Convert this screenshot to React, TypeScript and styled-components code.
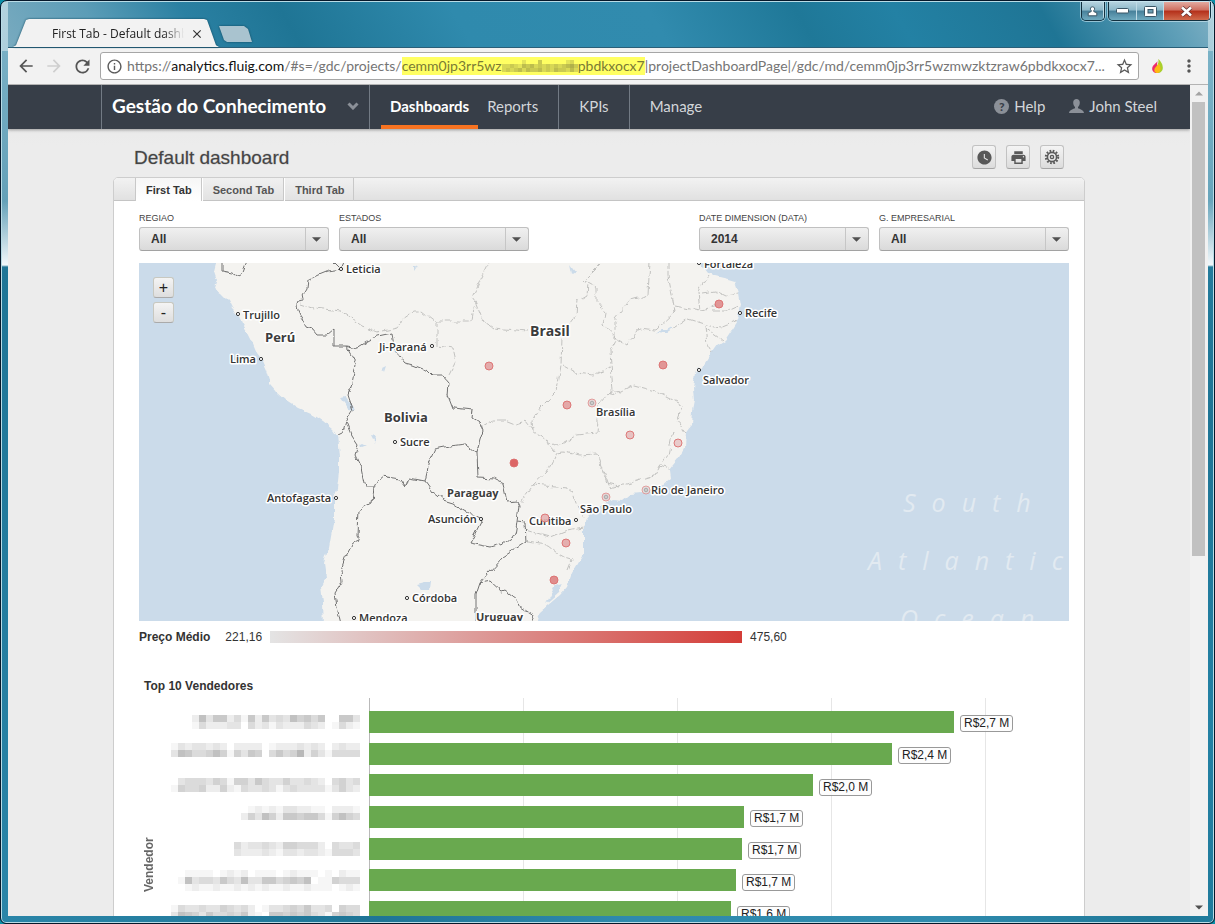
import React from "react";
import styled, { createGlobalStyle } from "styled-components";
import {
  MdArrowBack,
  MdArrowForward,
  MdRefresh,
  MdInfoOutline,
  MdStarBorder,
  MdMoreVert,
  MdPrint,
  MdWatchLater,
  MdClose,
} from "react-icons/md";

const ui = `"Open Sans", "Noto Sans", sans-serif`;
const brand = `Lato, "Open Sans", sans-serif`;
const body = `"Liberation Sans", Arial, sans-serif`;

const GlobalStyle = createGlobalStyle`
  *, *::before, *::after { box-sizing: border-box; }
  html, body { margin: 0; height: 100%; overflow: hidden; background: #0a8fa8; }
  button, select { font: inherit; color: inherit; margin: 0; padding: 0; border: 0; background: none; cursor: pointer; }
  a { color: inherit; text-decoration: none; }
  svg { display: block; flex: none; }
`;

/* ---------- Window frame ---------- */

const Window = styled.div`
  display: flex;
  flex-direction: column;
  height: 100vh;
  padding: 1px 6px 7px 7px;
  border: 1px solid #06182a;
  border-radius: 7px 7px 6px 6px;
  box-shadow: inset 0 0 0 1px #b9dce6;
  background:
    linear-gradient(100deg, rgba(255, 255, 255, 0.42) 0, rgba(255, 255, 255, 0.3) 60px, transparent 240px) 0 0 / 100% 50px no-repeat,
    linear-gradient(260deg, rgba(255, 255, 255, 0.38) 0, rgba(255, 255, 255, 0.3) 60px, transparent 240px) 0 0 / 100% 50px no-repeat,
    linear-gradient(180deg, rgba(255, 255, 255, 0.4) 0, rgba(255, 255, 255, 0.3) 200px, #f2f8fb 264px, transparent 266px) 0 0 / 100% 100% no-repeat,
    linear-gradient(60deg, #2a85a8 0, #1f7596 22%, #2f8aad 36%, #308bae 54%, #1f7898 66%, #2381a4 76%, #1f7595 86%, #2d87a8 100%);
`;

const TitleBar = styled.header`
  display: flex;
  align-items: flex-end;
  flex: none;
  height: 45px;
  padding-left: 5px;
  background: linear-gradient(60deg, #78aabf 0, #5c9db7 8%, #2a80a2 16%, #1f7595 24%, #2f8aad 38%, #318bae 54%, #1f7898 66%, #2381a4 74%, #1f7595 86%, #5f9fb8 96%, #7fb0c4 100%);
`;

const TabOutline = styled.div`
  filter: drop-shadow(0 0 1px #10485f);
`;

const BrowserTab = styled.div`
  display: flex;
  align-items: center;
  width: 206px;
  height: 28px;
  padding: 2px 15px 0 39px;
  gap: 6px;
  font: 12px/16px ${ui};
  color: #222;
  background: #f2f2f2;
  clip-path: polygon(0 100%, 3px 94%, 13px 4%, 16px 0, 191px 0, 194px 4%, 203px 94%, 100% 100%);
`;

const TabTitle = styled.span`
  flex: 0 0 132px;
  overflow: hidden;
  white-space: nowrap;
  mask-image: linear-gradient(90deg, #000 112px, transparent 132px);
`;

const NewTab = styled.button`
  width: 33px;
  height: 16px;
  margin-bottom: 5px;
  background: #a9c3cf;
  clip-path: polygon(0 0, 25px 0, 29px 3px, 33px 100%, 8px 100%, 5px 14px);
`;

const WindowButtons = styled.div`
  display: flex;
  align-self: flex-start;
  margin: 0 -3px 0 auto;
  gap: 3px;
`;

const ButtonGroup = styled.div`
  display: flex;
  height: 19px;
  border: 1px solid #12303f;
  border-top: 0;
  border-radius: 0 0 5px 5px;
  box-shadow: 0 0 0 1px rgba(210, 235, 245, 0.6);
  overflow: hidden;
`;

const CaptionButton = styled.button<{ $width: number; $danger?: boolean }>`
  display: flex;
  align-items: center;
  justify-content: center;
  width: ${(p) => p.$width}px;
  border-right: 1px solid #bfdbe6;
  background: ${(p) =>
    p.$danger
      ? "linear-gradient(#e3aaa0 0, #cf6f60 45%, #b4301a 50%, #d06a4c 100%)"
      : "linear-gradient(#b5d3df 0, #8db8c9 45%, #47809a 50%, #6faabf 100%)"};
`;

const Toolbar = styled.div`
  display: flex;
  align-items: center;
  flex: none;
  height: 38px;
  padding: 0 5px 0 8px;
  background: #f2f2f2;
  border-top: 1px solid #2a5f78;
  border-bottom: 1px solid #b3b3b3;
`;

const ToolButton = styled.button<{ $dim?: boolean }>`
  display: flex;
  align-items: center;
  justify-content: center;
  width: 28px;
  height: 28px;
  flex: none;
  color: ${(p) => (p.$dim ? "#cfcfcf" : "#555")};
`;

const NavButtons = styled.div`
  display: flex;
  flex: none;
  width: 84px;
  margin-left: -4px;
`;

const ExtensionButtons = styled.div`
  display: flex;
  flex: none;
  gap: 4px;
  margin-left: 4px;
`;

const AddressBar = styled.div`
  display: flex;
  align-items: center;
  flex: 1;
  min-width: 0;
  height: 28px;
  margin-left: 4px;
  padding: 0 4px 0 5px;
  gap: 4px;
  border: 1px solid #a6a6a6;
  border-radius: 3px;
  background: #fff;
  color: #5a5a5a;
`;

const Url = styled.div`
  display: flex;
  align-items: center;
  flex: 1;
  min-width: 0;
  overflow: hidden;
  white-space: nowrap;
  font: 14px/18px ${brand};
  color: #757575;
  outline: none;
`;

const Host = styled.span`
  color: #111;
`;

const Highlight = styled.mark`
  display: flex;
  align-items: center;
  background: #ffff62;
  color: #7a7a34;
`;

const Viewport = styled.div`
  display: flex;
  flex: 1;
  min-height: 0;
  background: #efefef;
`;

/* ---------- Scroll bar ---------- */

const ScrollBar = styled.div`
  display: flex;
  flex-direction: column;
  align-items: center;
  flex: none;
  width: 18px;
  padding: 0 3px 0 2px;
  background: #f1f1f1;
`;

const ScrollArrow = styled.button`
  display: flex;
  align-items: center;
  justify-content: center;
  width: 13px;
  height: 17px;
  flex: none;
`;

const ScrollTrack = styled.div`
  flex: 1;
  width: 13px;
`;

const ScrollThumb = styled.div`
  height: 57%;
  background: #c1c1c1;
`;

/* ---------- Application ---------- */

const Page = styled.div`
  flex: 1;
  min-width: 0;
  overflow: hidden;
  font-family: ${body};
  color: #333;
  background: linear-gradient(#e6e6e6 0, #ececec 60px, #ececec);
`;

const NavBar = styled.nav`
  display: flex;
  height: 44px;
  padding: 0 33px 0 93px;
  background: #373e48;
  box-shadow: 0 1px 3px rgba(0, 0, 0, 0.35);
  color: #d3d6da;
  font: 400 15px/20px ${brand};
`;

const Project = styled.button`
  display: flex;
  align-items: center;
  justify-content: space-between;
  width: 269px;
  padding: 0 10px 2px;
  border: solid #727a84;
  border-width: 0 1px;
  font: 700 19px/24px ${brand};
  color: #fff;
`;

const NavGroup = styled.div<{ $last?: boolean }>`
  display: flex;
  padding: 0 11px;
  border-right: ${(p) => (p.$last ? 0 : 1)}px solid #727a84;
`;

const NavLink = styled.a<{ $active?: boolean }>`
  display: flex;
  align-items: center;
  padding: 2px 9px 0;
  border-bottom: 4px solid ${(p) => (p.$active ? "#f77321" : "transparent")};
  color: ${(p) => (p.$active ? "#fff" : "inherit")};
  font-weight: ${(p) => (p.$active ? 700 : 400)};
`;

const UserLinks = styled.div`
  display: flex;
  gap: 24px;
  margin-left: auto;
  padding-bottom: 2px;
`;

const UserLink = styled.a`
  display: flex;
  align-items: center;
  gap: 5px;
`;

const Content = styled.main`
  max-width: 972px;
  margin: 0 auto;
`;

const PageHead = styled.div`
  display: flex;
  align-items: center;
  height: 48px;
  padding: 8px 21px 0;
`;

const PageTitle = styled.h1`
  flex: 1;
  margin: 0;
  padding-top: 2px;
  font-size: 19px;
  line-height: 24px;
  font-weight: 400;
  color: #444;
  -webkit-text-stroke: 1px rgba(68, 68, 68, 0.25);
`;

const HeadActions = styled.div`
  display: flex;
  gap: 10px;
`;

const IconButton = styled.button`
  display: flex;
  align-items: center;
  justify-content: center;
  width: 24px;
  height: 24px;
  border: 1px solid #c2c2c2;
  border-bottom-color: #a5a5a5;
  border-radius: 3px;
  background: linear-gradient(#f4f4f4, #dcdcdc);
  color: #585858;
`;

const Panel = styled.section`
  min-height: 1100px;
  border: 1px solid #cdcdcd;
  border-radius: 5px;
  background: #fff;
  overflow: hidden;
`;

const TabStrip = styled.div`
  display: flex;
  height: 23px;
  padding-left: 21px;
  background: linear-gradient(#f2f2f2, #e0e0e0);
  box-shadow: inset 0 -1px #c4c4c4;
`;

const DashTab = styled.button<{ $active?: boolean }>`
  padding: 1px 9px 0 ${(p) => (p.$active ? 10 : 11)}px;
  border: solid #c8c8c8;
  border-width: 0 1px 0 ${(p) => (p.$active ? 1 : 0)}px;
  box-shadow: ${(p) => (p.$active ? "none" : "inset 1px 0 #fff, inset 0 -1px #c4c4c4")};
  background: ${(p) => (p.$active ? "linear-gradient(#f6f6f6, #fff)" : "linear-gradient(#f0f0f0, #e2e2e2)")};
  color: ${(p) => (p.$active ? "#333" : "#555")};
  font: 700 11px/16px ${body};
`;

const PanelBody = styled.div`
  padding: 11px 15px 0 25px;
`;

const Filters = styled.div`
  display: flex;
  gap: 10px;
`;

const Filter = styled.label<{ $width: number; $push?: boolean }>`
  display: flex;
  flex-direction: column;
  gap: 3px;
  width: ${(p) => p.$width}px;
  margin-left: ${(p) => (p.$push ? "auto" : "0")};
  font-size: 9px;
  line-height: 12px;
  color: #444;
  text-transform: uppercase;
`;

const SelectBox = styled.span`
  display: grid;
  grid-template-columns: 1fr 23px;
  align-items: center;
  height: 24px;
  border: 1px solid #c0c0c0;
  border-bottom-color: #a2a2a2;
  border-radius: 3px;
  background: linear-gradient(#f0f0f0, #dadada);
`;

const Select = styled.select`
  grid-area: 1 / 1 / 2 / 3;
  appearance: none;
  height: 22px;
  padding: 0 11px;
  font: 700 12px/22px ${body};
  color: #333;
  outline: none;
`;

const SelectArrow = styled.span`
  display: flex;
  grid-area: 1 / 2;
  align-items: center;
  justify-content: center;
  height: 22px;
  padding-right: 2px;
  border-left: 1px solid #c6c6c6;
  pointer-events: none;
`;

/* ---------- Map ---------- */

const MapBox = styled.div`
  display: grid;
  height: 358px;
  margin-top: 12px;
  overflow: hidden;
`;

const MapSvg = styled.svg`
  grid-area: 1 / 1;
  width: 100%;
  height: 358px;
`;

const ZoomControls = styled.div`
  display: flex;
  flex-direction: column;
  grid-area: 1 / 1;
  justify-self: start;
  align-self: start;
  gap: 4px;
  padding: 14px;
`;

const ZoomButton = styled.button`
  width: 21px;
  height: 21px;
  border: 1px solid #c8c8c0;
  border-bottom-color: #aaa;
  border-radius: 3px;
  background: linear-gradient(#f4f4f4, #dedede);
  font: 400 16px/18px ${body};
  color: #222;
`;

const COAST =
  "M216 263L214 271 217 280 214 289 221 293 228 300 232 308 238 314 242 323 247 331 252 341 257 353 263 361 267 370 270 380 270 384 277 392 287 401 298 408 312 414 323 421 333 429 337 435 338 445 339 457 339 472 337 490 334 498 334 518 332 530 329 547 324 563 326 577 321 587 323 603 324 625 537 625 540 612 548 605 560 595 567 587 572 573 578 563 584 553 584 523 590 515 602 505 613 500 622 501 632 493 650 491 662 485 671 478 670 470 678 460 685 448 686 433 691 426 692 411 694 401 693 388 695 373 697 366 700 370 705 363 710 355 717 345 725 340 733 328 738 320 741 305 739 293 735 281 728 279 715 276 708 273 702 265 700 258 216 258Z";

const COUNTRY_BORDERS = [
  "M222 261L222 271 232 273 238 277 242 274 247 261",
  "M333 261L341 269 344 262M341 269L328 271 318 275 308 280 307 288 303 295 304 300 298 301 296 306 300 315 304 321 306 327 312 329 317 335 327 335 334 329 334 346 346 346 357 348 365 343 378 336 392 333 395 351 405 363 413 365 428 371 433 376 443 376 449 383 448 395 453 408 473 410 472 418 480 423 483 431 480 440 477 452",
  "M346 346L356 364 352 383 348 395 353 410 346 421 343 431 337 434M346 421L352 436 358 445 355 455 361 468 365 488 374 488 378 480 384 475 387 478 400 480 406 488 409 478 425 481",
  "M374 488L372 502 358 510 357 535 360 540 353 543 345 558 341 570 342 582 335 593 337 607 341 624",
  "M425 481L430 460 435 449 450 446 465 444 477 452 478 478 495 479 503 483 507 502 517 501 519 505 517 522 525 523 526 542 503 557 488 573 480 583 476 595 476 624",
  "M517 522L515 535 503 543 490 547 470 543 482 520 463 510 453 503 443 500 433 492 425 481",
  "M480 583L490 581 502 592 505 591 517 600 520 607 533 615 529 624",
];

const STATE_BORDERS = [
  "M300 303L315 308 341 311 362 326 378 332 397 328 403 319 413 312 422 312 432 320 437 321 472 321 475 301 472 297 490 261",
  "M475 301L483 321 493 328 528 331M437 321L437 346 453 348 456 361 448 377",
  "M603 261L583 281 588 283 587 295 577 301 576 315 568 326 562 338 561 365 557 391 540 408 532 421 533 431 545 440 557 446 577 435 597 433 598 421 597 405 610 391 620 393",
  "M482 427L494 420 505 420 515 424 526 421 533 430",
  "M563 365L577 373 593 375 610 368M588 283L597 288 597 303 605 313 603 325 617 338 610 351 613 391",
  "M650 261L648 295 630 300 615 318 615 338 627 345 640 328 655 330 675 311 668 275 668 261",
  "M675 306L700 311 717 305M700 311L698 291 708 276M702 293L715 291 725 296 739 294M713 311L727 311 740 305",
  "M673 329L688 319 710 326 720 328 737 321M705 326L707 345 712 353M705 328L722 340",
  "M610 391L613 395 633 385 655 391 683 405 677 421 686 433",
  "M673 430L668 455 660 465 655 475 610 488 600 460M660 465L671 469",
  "M545 440L557 453 547 472 533 485 520 503M557 453L562 452 580 455 597 454 607 483 620 486",
  "M533 485L567 488 573 493 578 508 584 518M525 530L550 537 567 530 584 527M527 542L547 545 562 557 572 560 568 570",
];

const LAKES = [
  "M341 398L346 397 355 410 349 409Z",
  "M371 435L376 436 375 443Z",
  "M360 443L366 446 361 448Z",
  "M416 584L424 582 430 582 429 590 422 590Z",
  "M570 265L575 272 572 274Z",
  "M414 268L418 266 414 272Z",
  "M555 585L562 583 558 593 545 604Z",
  "M382 369L386 367 384 373Z",
];

type CityProps = { name: string; x: number; y: number; dot?: [number, number] };

const CITIES: CityProps[] = [
  { name: "Leticia", x: 346, y: 273, dot: [341, 269] },
  { name: "Trujillo", x: 243, y: 319, dot: [238, 314] },
  { name: "Lima", x: 230, y: 363, dot: [261, 359] },
  { name: "Ji-Paraná", x: 379, y: 351, dot: [432, 346] },
  { name: "Sucre", x: 400, y: 446, dot: [395, 442] },
  { name: "Antofagasta", x: 267, y: 502, dot: [336, 498] },
  { name: "Asunción", x: 428, y: 523, dot: [481, 519] },
  { name: "Curitiba", x: 529, y: 525, dot: [576, 520] },
  { name: "São Paulo", x: 580, y: 513 },
  { name: "Rio de Janeiro", x: 651, y: 494 },
  { name: "Brasília", x: 596, y: 416 },
  { name: "Salvador", x: 703, y: 384, dot: [699, 370] },
  { name: "Recife", x: 745, y: 317, dot: [740, 313] },
  { name: "Fortaleza", x: 704, y: 268, dot: [699, 263] },
  { name: "Córdoba", x: 412, y: 602, dot: [407, 598] },
  { name: "Mendoza", x: 359, y: 622, dot: [354, 618] },
];

const COUNTRIES = [
  { name: "Perú", x: 265, y: 342, size: 13 },
  { name: "Brasil", x: 530, y: 336, size: 14 },
  { name: "Bolivia", x: 384, y: 422, size: 13 },
  { name: "Paraguay", x: 447, y: 497, size: 11 },
  { name: "Uruguay", x: 476, y: 621, size: 11 },
];

const MARKERS: { x: number; y: number; fill: string; ring?: boolean }[] = [
  { x: 719, y: 304, fill: "#df8c8c" },
  { x: 489, y: 366, fill: "#e2a3a3" },
  { x: 663, y: 365, fill: "#df8c8c" },
  { x: 567, y: 405, fill: "#e2a0a0" },
  { x: 592, y: 403, fill: "#e6d4d4", ring: true },
  { x: 630, y: 435, fill: "#e5bcbc" },
  { x: 678, y: 443, fill: "#e8c6c6" },
  { x: 514, y: 463, fill: "#d95555" },
  { x: 606, y: 497, fill: "#e6d4d4", ring: true },
  { x: 646, y: 490, fill: "#e2dede", ring: true },
  { x: 545, y: 518, fill: "#e4b3b3" },
  { x: 566, y: 543, fill: "#e2a6a6" },
  { x: 554, y: 580, fill: "#dd8282" },
];

const CityText = styled.text`
  font: 600 11px ${ui};
  fill: #333;
  stroke: #fff;
  stroke-width: 3px;
  stroke-linejoin: round;
  paint-order: stroke;
`;

const CountryText = styled(CityText)<{ $size: number }>`
  font-size: ${(p) => p.$size}px;
  font-weight: 700;
  fill: #3c3c3c;
`;

const OceanText = styled.text`
  font: italic 400 25px ${ui};
  letter-spacing: 16px;
  fill: #e2eaf1;
`;

function SalesMap() {
  return (
    <MapBox>
      <MapSvg viewBox="139 263 930 358" preserveAspectRatio="xMinYMin slice" role="img" aria-label="Brasil">
        <defs>
          <filter id="rugged" x="139" y="255" width="930" height="372" filterUnits="userSpaceOnUse" colorInterpolationFilters="sRGB">
            <feTurbulence type="fractalNoise" baseFrequency="0.11" numOctaves="2" seed="4" />
            <feDisplacementMap in="SourceGraphic" scale="6" xChannelSelector="R" yChannelSelector="G" />
          </filter>
        </defs>
        <rect x="139" y="263" width="930" height="358" fill="#cbdbea" />
        <g filter="url(#rugged)" fill="none">
          <path d={COAST} fill="#f4f3f0" />
          {LAKES.map((d) => (
            <path key={d} d={d} fill="#cbdbea" />
          ))}
          <path d="M656 334L661 331 667 331 672 328" stroke="#cbdbea" strokeWidth="2" />
          {STATE_BORDERS.map((d) => (
            <path key={d} d={d} stroke="#c2c2c0" strokeDasharray="7 2" />
          ))}
          {COUNTRY_BORDERS.map((d) => (
            <path key={d} d={d} stroke="#727272" strokeLinejoin="round" />
          ))}
        </g>
        <OceanText x="903" y="512">South</OceanText>
        <OceanText x="868" y="570">Atlantic</OceanText>
        <OceanText x="900" y="628">Ocean</OceanText>
        {CITIES.map((c) => (
          <g key={c.name}>
            {c.dot && <circle cx={c.dot[0]} cy={c.dot[1]} r="1.6" fill="#fff" stroke="#333" />}
            <CityText x={c.x} y={c.y}>{c.name}</CityText>
          </g>
        ))}
        {COUNTRIES.map((c) => (
          <CountryText key={c.name} x={c.x} y={c.y} $size={c.size}>{c.name}</CountryText>
        ))}
        {MARKERS.map((m) => (
          <g key={`${m.x}-${m.y}`}>
            <circle cx={m.x} cy={m.y} r="4" fill={m.fill} fillOpacity="0.9" stroke="#dc6f6f" strokeOpacity={m.ring ? 0.6 : 0.9} />
            {m.ring && <circle cx={m.x} cy={m.y} r="1.8" fill="#ccc" stroke="#aaa" />}
          </g>
        ))}
      </MapSvg>
      <ZoomControls>
        <ZoomButton aria-label="Zoom in">+</ZoomButton>
        <ZoomButton aria-label="Zoom out">-</ZoomButton>
      </ZoomControls>
    </MapBox>
  );
}

const Legend = styled.div`
  display: flex;
  align-items: center;
  height: 32px;
  gap: 8px;
  font-size: 12px;
  line-height: 16px;
`;

const LegendTitle = styled.strong`
  margin-right: 7px;
`;

const LegendRamp = styled.div`
  flex: 0 1 472px;
  height: 12px;
  background: linear-gradient(90deg, #e4e4e4, #d43d38);
`;

/* ---------- Chart ---------- */

const ChartTitle = styled.h2`
  margin: 25px 0 4px 5px;
  font-size: 12px;
  line-height: 16px;
  font-weight: 700;
`;

const Chart = styled.div`
  display: grid;
  grid-template-columns: 20px 201px 1fr;
  height: 333px;
`;

const AxisTitle = styled.div`
  display: flex;
  align-items: center;
  justify-content: center;
  writing-mode: vertical-rl;
  transform: rotate(180deg);
  font-size: 12px;
  line-height: 16px;
  font-weight: 700;
  color: #666;
`;

const RowLabels = styled.div`
  display: flex;
  flex-direction: column;
  padding: 8px 0;
`;

const RowLabel = styled.div`
  display: flex;
  flex: 1;
  align-items: center;
  justify-content: flex-end;
`;

const Plot = styled.div`
  display: grid;
  margin-left: 9px;
`;

const GridLines = styled.div`
  display: grid;
  grid-area: 1 / 1;
  grid-template-columns: repeat(4, 22%) 1fr;
`;

const GridLine = styled.div<{ $axis?: boolean }>`
  border-left: 1px solid ${(p) => (p.$axis ? "#b9b9b9" : "#e6e6e6")};
`;

const Bars = styled.div`
  display: flex;
  flex-direction: column;
  grid-area: 1 / 1;
  padding: 8px 0;
`;

const BarRow = styled.div`
  display: flex;
  flex: 1;
  align-items: center;
  gap: 6px;
`;

const Bar = styled.div`
  height: 22px;
  background: #69a94f;
`;

const BarValue = styled.span`
  margin-top: 4px;
  padding: 0 3px;
  border: 1px solid #999;
  border-radius: 3px;
  background: rgba(252, 252, 252, 0.8);
  font-size: 12px;
  line-height: 15px;
  color: #222;
  white-space: nowrap;
`;

/* Masked text: each digit is the darkness of one cell, lines are right-aligned. */
function Mask({ lines, ink = "#000", cell = 7, step = 0.035 }: { lines: string[]; ink?: string; cell?: number; step?: number }) {
  const cols = Math.max(...lines.map((l) => l.length));
  return (
    <svg width={cols * cell} height={lines.length * cell} shapeRendering="crispEdges" aria-hidden="true">
      {lines.flatMap((line, row) =>
        [...line].map((d, i) =>
          d === "0" ? null : (
            <rect
              key={`${row}-${i}`}
              x={(cols - line.length + i) * cell}
              y={row * cell}
              width={cell}
              height={cell}
              fill={ink}
              fillOpacity={Number(d) * step}
            />
          )
        )
      )}
    </svg>
  );
}

const ROWS = [
  { value: "R$2,7 M", width: 585, mask: ["273662416263437564600663", "142223304231322243201421"] },
  { value: "R$2,4 M", width: 523, mask: ["132332320222201222323202322", "376445751536504645825314444", "0"] },
  { value: "R$2,0 M", width: 444, mask: ["034443541553643353343204534", "154452252143343134333313532"] },
  { value: "R$1,7 M", width: 375, mask: ["01212133221102221", "25375266566415754", "0"] },
  { value: "R$1,7 M", width: 373, mask: ["423343255444204334", "322232133233214443"] },
  { value: "R$1,7 M", width: 367, mask: ["01111012120111012111010211", "17344364373366456570115444", "01211211212121121121110121"] },
  { value: "R$1,6 M", width: 362, mask: ["143343354342013345463340544", "376536445462106656564315654"] },
  { value: "R$1,5 M", width: 331, mask: ["3433425344360454"] },
  { value: "R$1,4 M", width: 309, mask: ["34335536442043"] },
  { value: "R$1,3 M", width: 287, mask: ["354363536044"] },
];

function SellerChart() {
  return (
    <Chart>
      <AxisTitle>Vendedor</AxisTitle>
      <RowLabels>
        {ROWS.map((r, i) => (
          <RowLabel key={i}>
            <Mask lines={r.mask} />
          </RowLabel>
        ))}
      </RowLabels>
      <Plot>
        <GridLines>
          <GridLine $axis />
          <GridLine />
          <GridLine />
          <GridLine />
          <GridLine />
        </GridLines>
        <Bars>
          {ROWS.map((r, i) => (
            <BarRow key={i}>
              <Bar style={{ width: `${r.width / 7}%` }} />
              <BarValue>{r.value}</BarValue>
            </BarRow>
          ))}
        </Bars>
      </Plot>
    </Chart>
  );
}

/* ---------- Icons ---------- */

const Triangle = ({ up, color = "#505050", width = 9 }: { up?: boolean; color?: string; width?: number }) => (
  <svg width={width} height="5" viewBox="0 0 10 5">
    <path d={up ? "M0 5L5 0 10 5Z" : "M0 0L5 5 10 0Z"} fill={color} />
  </svg>
);

const FlameIcon = () => (
  <svg width="13" height="16" viewBox="0 0 14 18">
    <path d="M8 1C8 5 1 7 1 12c0 3 2.500 5 6 5 2-3-3-6 1-16Z" fill="#ee2a6b" />
    <path d="M8 1c4 4 5 7 5 10 0 3.500-2.500 6-6 6L5 13c0-4 4-6 3-12Z" fill="#a9d02c" />
    <path d="M8 6c2 3 3 5 2 8-.8 2-2 3-4 3-2-.5-3-2-2.500-4C4 10 8 9 8 6Z" fill="#fdb913" />
  </svg>
);

const PersonIcon = () => (
  <svg width="15" height="14" viewBox="0 0 15 14">
    <path d="M7.500 0C5.500 0 4.200 1.400 4.200 3.600c0 2 .8 3.600 1.800 4.400v1.200C4.500 10 .5 10.500 0 14h15c-.5-3.500-4.500-4-6-4.800V8c1-.8 1.800-2.400 1.800-4.400C10.800 1.400 9.500 0 7.500 0Z" fill="#8b9098" />
  </svg>
);

const QuestionMark = styled.span`
  display: flex;
  align-items: center;
  justify-content: center;
  width: 15px;
  height: 15px;
  border-radius: 50%;
  background: #8b9098;
  color: #373e48;
  font: 900 12px/15px ${brand};
`;

const ChevronIcon = () => (
  <svg width="12" height="8" viewBox="0 0 12 8">
    <path d="M1.500 1.500L6 6l4.500-4.500" fill="none" stroke="#8b9098" strokeWidth="3" />
  </svg>
);

const GearIcon = () => (
  <svg width="16" height="16" viewBox="0 0 16 16" fill="none" stroke="#585858">
    <circle cx="8" cy="8" r="6.200" strokeWidth="2" strokeDasharray="1.700 1.546" />
    <circle cx="8" cy="8" r="4.600" strokeWidth="1.600" />
    <circle cx="8" cy="8" r="1.600" strokeWidth="1.400" />
  </svg>
);

const AccountGlyph = () => (
  <svg width="11" height="11" viewBox="0 0 11 11" fill="#fff" stroke="#3b5666" strokeWidth="1">
    <path d="M5.500.8a2 2 0 0 1 1.300 3.600v1.200l3 1.200v3H1.200v-3l3-1.200V4.400A2 2 0 0 1 5.500.8Z" />
  </svg>
);

const MinimizeGlyph = () => (
  <svg width="13" height="6" viewBox="0 0 13 6">
    <rect x=".5" y=".5" width="12" height="4.500" rx="1" fill="#fff" stroke="#3b5666" />
  </svg>
);

const MaximizeGlyph = () => (
  <svg width="13" height="11" viewBox="0 0 13 11">
    <rect x=".5" y=".5" width="12" height="10" rx="1" fill="#fff" stroke="#3b5666" />
    <rect x="4" y="3.500" width="5" height="3.500" fill="#6b9cb1" stroke="#3b5666" />
  </svg>
);

const CloseGlyph = () => (
  <svg width="13" height="11" viewBox="0 0 13 11">
    <path d="M2 1.500l9 8M11 1.500l-9 8" stroke="#5d3030" strokeWidth="4" />
    <path d="M2 1.500l9 8M11 1.500l-9 8" stroke="#fff" strokeWidth="2.600" />
  </svg>
);

export default function App() {
  return (
    <>
      <GlobalStyle />
      <Window>
        <TitleBar>
          <TabOutline>
            <BrowserTab>
              <TabTitle>First Tab - Default dashboard</TabTitle>
              <button aria-label="Close tab">
                <MdClose size={14} color="#333" />
              </button>
            </BrowserTab>
          </TabOutline>
          <TabOutline>
            <NewTab aria-label="New tab" />
          </TabOutline>
          <WindowButtons>
            <ButtonGroup>
              <CaptionButton $width={22} aria-label="Account"><AccountGlyph /></CaptionButton>
            </ButtonGroup>
            <ButtonGroup>
              <CaptionButton $width={28} aria-label="Minimize"><MinimizeGlyph /></CaptionButton>
              <CaptionButton $width={27} aria-label="Maximize"><MaximizeGlyph /></CaptionButton>
              <CaptionButton $width={46} $danger aria-label="Close"><CloseGlyph /></CaptionButton>
            </ButtonGroup>
          </WindowButtons>
        </TitleBar>

        <Toolbar>
          <NavButtons>
            <ToolButton aria-label="Back"><MdArrowBack size={20} /></ToolButton>
            <ToolButton $dim aria-label="Forward"><MdArrowForward size={20} /></ToolButton>
            <ToolButton aria-label="Reload"><MdRefresh size={21} /></ToolButton>
          </NavButtons>
          <AddressBar>
            <MdInfoOutline size={17} />
            <Url role="textbox" aria-label="Address" tabIndex={0}>
              <span>https://</span>
              <Host>analytics.fluig.com</Host>
              <span>/#s=/gdc/projects/</span>
              <Highlight>
                <span>cemm0jp3rr5wz</span>
                <Mask
                  lines={["0000020004000000230", "3343254534343434564", "3434535445343544353"]}
                  ink="#5a5a30"
                  cell={4}
                  step={0.08}
                />
                <span>pbdkxocx7</span>
              </Highlight>
              <span>|projectDashboardPage|/gdc/md/cemm0jp3rr5wzmwzktzraw6pbdkxocx7...</span>
            </Url>
            <MdStarBorder size={19} />
          </AddressBar>
          <ExtensionButtons>
            <ToolButton aria-label="Extension"><FlameIcon /></ToolButton>
            <ToolButton aria-label="Menu"><MdMoreVert size={20} /></ToolButton>
          </ExtensionButtons>
        </Toolbar>

        <Viewport>
          <Page>
            <NavBar>
              <Project>
                Gestão do Conhecimento
                <ChevronIcon />
              </Project>
              <NavGroup>
                <NavLink href="#dashboards" $active>Dashboards</NavLink>
                <NavLink href="#reports">Reports</NavLink>
              </NavGroup>
              <NavGroup>
                <NavLink href="#kpis">KPIs</NavLink>
              </NavGroup>
              <NavGroup $last>
                <NavLink href="#manage">Manage</NavLink>
              </NavGroup>
              <UserLinks>
                <UserLink href="#help">
                  <QuestionMark aria-hidden="true">?</QuestionMark>
                  Help
                </UserLink>
                <UserLink href="#account">
                  <PersonIcon />
                  John Steel
                </UserLink>
              </UserLinks>
            </NavBar>

            <Content>
              <PageHead>
                <PageTitle>Default dashboard</PageTitle>
                <HeadActions>
                  <IconButton aria-label="Schedule"><MdWatchLater size={17} /></IconButton>
                  <IconButton aria-label="Print"><MdPrint size={17} /></IconButton>
                  <IconButton aria-label="Settings"><GearIcon /></IconButton>
                </HeadActions>
              </PageHead>

              <Panel>
                <TabStrip>
                  <DashTab $active>First Tab</DashTab>
                  <DashTab>Second Tab</DashTab>
                  <DashTab>Third Tab</DashTab>
                </TabStrip>
                <PanelBody>
                  <Filters>
                    {[
                      { label: "Regiao", value: "All", width: 190 },
                      { label: "Estados", value: "All", width: 190 },
                      { label: "Date dimension (Data)", value: "2014", width: 170, push: true },
                      { label: "G. Empresarial", value: "All", width: 190 },
                    ].map((f) => (
                      <Filter key={f.label} $width={f.width} $push={f.push}>
                        {f.label}
                        <SelectBox>
                          <Select defaultValue={f.value}>
                            <option>{f.value}</option>
                          </Select>
                          <SelectArrow><Triangle /></SelectArrow>
                        </SelectBox>
                      </Filter>
                    ))}
                  </Filters>
                  <SalesMap />
                  <Legend>
                    <LegendTitle>Preço Médio</LegendTitle>
                    <span>221,16</span>
                    <LegendRamp />
                    <span>475,60</span>
                  </Legend>
                  <ChartTitle>Top 10 Vendedores</ChartTitle>
                  <SellerChart />
                </PanelBody>
              </Panel>
            </Content>
          </Page>
          <ScrollBar>
            <ScrollArrow aria-label="Scroll up"><Triangle up color="#a3a3a3" width={8} /></ScrollArrow>
            <ScrollTrack>
              <ScrollThumb />
            </ScrollTrack>
            <ScrollArrow aria-label="Scroll down"><Triangle width={8} /></ScrollArrow>
          </ScrollBar>
        </Viewport>
      </Window>
    </>
  );
}
